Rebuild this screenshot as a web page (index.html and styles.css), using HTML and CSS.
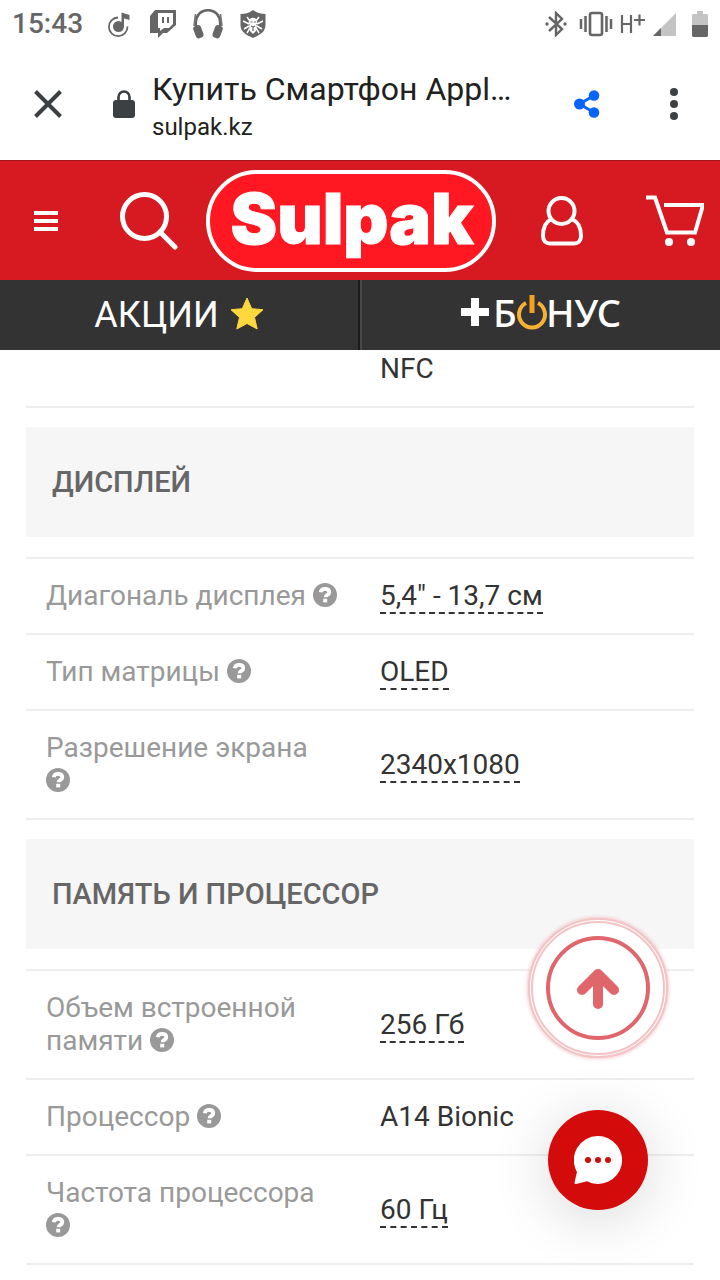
FILE: index.html
```html
<!DOCTYPE html>
<html lang="ru">
<head>
<meta charset="utf-8">
<meta name="viewport" content="width=device-width, initial-scale=1">
<title>Купить Смартфон Apple</title>
<link rel="stylesheet" href="styles.css">
</head>
<body>
<svg class="sprite" aria-hidden="true">
  <symbol id="help" viewBox="0 0 24 24">
    <circle cx="12" cy="12" r="12" fill="currentColor"/>
    <path d="M7.700 9.300C8 6.900 9.700 5.800 12 5.800c2.500 0 4.300 1.200 4.300 3.400 0 2.700-3.700 2.700-3.700 5" fill="none" stroke="#fff" stroke-width="3.800"/>
    <rect x="10.200" y="15.800" width="4" height="3.600" fill="#fff"/>
  </symbol>
</svg>

<div class="status">
  <div class="status-group">
    <span class="clock">15:43</span>
    <svg width="26" height="28" viewBox="0 0 26 28"><circle cx="11.500" cy="16.500" r="5.500" fill="#666"/><path d="M14.500 17V2.500l8 2.500v5l-5.500-1.500V17z" fill="#666"/><path d="M11 7.500a9.300 9.300 0 1 0 9.500 9" fill="none" stroke="#666" stroke-width="1.800"/></svg>
    <svg width="26" height="28" viewBox="0 0 26 28"><path d="M5 0h21v15l-9 8h-4l-5 5v-5H0V6z" fill="#666"/><path d="M8 3h15v11l-4 4h-5l-4 3v-3H8z" fill="#fff"/><path d="M13 7v6M18 7v6" stroke="#666" stroke-width="2"/></svg>
    <svg width="30" height="30" viewBox="0 0 30 30"><path d="M3 17C0-4 30-4 27 17" fill="none" stroke="#666" stroke-width="2.600"/><path d="M2.500 5 1 17M27.500 5 29 17" stroke="#777" stroke-width="1.600"/><rect x="1.500" y="16" width="8" height="13" rx="3" transform="rotate(-20 6 23)" fill="#666"/><rect x="20.500" y="16" width="8" height="13" rx="3" transform="rotate(20 24 23)" fill="#666"/></svg>
    <svg width="26" height="28" viewBox="0 0 26 28"><path d="M13 0c4 3 8 4 12.500 4v11c0 7-6 10-12.500 13C6.500 25 .5 22 .5 15V4C5 4 9 3 13 0z" fill="#666"/><g fill="none" stroke="#fff" stroke-width="1.500"><path d="M10 11 7 7M16 11l3-4M9 14l-6-3M17 14l6-3M9 16l-5 3M17 16l5 3M10 18l-3 5M16 18l3 5"/></g><circle cx="13" cy="12" r="4.300" fill="#fff"/><path d="M9 15h8l-1 6-3 3-3-3z" fill="#fff"/><path d="M10.500 12h2M14 12h2M11 16l2 1 2-1M13 17v4" stroke="#666" stroke-width="1.200" fill="none"/></svg>
  </div>
  <div class="status-group status-right">
    <svg width="22" height="26" viewBox="0 0 22 26"><path d="m4 6 13 12-6 6V2l6 6L4 20" fill="none" stroke="#666" stroke-width="2.400"/><circle cx="2" cy="13" r="1.700" fill="#666"/><circle cx="20" cy="13" r="1.700" fill="#666"/></svg>
    <svg width="34" height="26" viewBox="0 0 34 26"><rect x="11" y="2" width="12" height="22" rx="2" fill="none" stroke="#666" stroke-width="2.600"/><path d="M6.500 5v16M2 8v10M27.500 5v16M32 8v10" stroke="#666" stroke-width="2.500"/></svg>
    <svg class="network" width="27" height="26" viewBox="0 0 27 26"><path d="M3 4v18M12 4v18M3 13h9M15 9h11M20.500 3.500v11" fill="none" stroke="#666" stroke-width="2.200"/></svg>
    <svg width="24" height="24" viewBox="0 0 24 24"><path d="M24 1v23H1z" fill="#c4c4c4"/><path d="M9 16v8H1z" fill="#666"/></svg>
    <svg class="battery" width="16" height="26" viewBox="0 0 16 26"><path d="M5 0h6v3h4l1 1v11H0V4l1-1h4z" fill="#c4c4c4"/><path d="M0 14h16v11l-1 1H1l-1-1z" fill="#666"/></svg>
  </div>
</div>

<div class="toolbar">
  <button class="icon-btn close" aria-label="Закрыть"><svg width="28" height="28" viewBox="0 0 28 28"><path d="m1.500 1.500 25 25m0-25-25 25" stroke="#3c4043" stroke-width="4"/></svg></button>
  <svg class="lock" width="22" height="28" viewBox="0 0 22 28"><rect y="10" width="22" height="18" rx="3" fill="#3c4043"/><path d="M5.500 11V7a5.500 5.500 0 0 1 11 0v4" fill="none" stroke="#3c4043" stroke-width="2.600"/></svg>
  <div class="page-info">
    <div class="page-title">Купить Смартфон Appl…</div>
    <div class="page-host">sulpak.kz</div>
  </div>
  <button class="icon-btn share" aria-label="Поделиться"><svg width="26" height="28" viewBox="0 0 26 28"><g fill="#0a63fa"><circle cx="5.500" cy="14" r="5.500"/><circle cx="20" cy="5.500" r="5.300"/><circle cx="20" cy="22.500" r="5.300"/></g><path d="M20 5.500 5.500 14 20 22.500" fill="none" stroke="#0a63fa" stroke-width="2.800"/></svg></button>
  <button class="icon-btn" aria-label="Меню браузера"><svg width="8" height="32" viewBox="0 0 8 32"><g fill="#3c4043"><circle cx="4" cy="4" r="4"/><circle cx="4" cy="16" r="4"/><circle cx="4" cy="28" r="4"/></g></svg></button>
</div>

<header class="site-header">
  <button class="icon-btn" aria-label="Каталог"><svg width="24" height="20" viewBox="0 0 24 20"><path d="M0 2h24M0 10h24M0 18h24" stroke="#fff" stroke-width="4"/></svg></button>
  <button class="icon-btn search" aria-label="Поиск"><svg width="58" height="58" viewBox="0 0 58 58"><circle cx="24.500" cy="24.500" r="22" fill="none" stroke="#fff" stroke-width="5"/><path d="m40 40 15 15" stroke="#fff" stroke-width="5" stroke-linecap="round"/></svg></button>
  <a class="logo" href="#" aria-label="Sulpak"><svg width="290" height="102" viewBox="0 0 290 102"><rect x="2" y="2" width="286" height="98" rx="49" fill="#ff1721" stroke="#fff" stroke-width="4"/><text class="logo-text" x="146" y="74" text-anchor="middle">Sulpak</text></svg></a>
  <button class="icon-btn user" aria-label="Профиль"><svg width="42" height="50" viewBox="0 0 42 50"><g fill="none" stroke="#fff" stroke-width="4"><circle cx="20.500" cy="15" r="13"/><path d="M10 23.500C4 26 2 33 2 40c0 5 3 7.500 7 7.500h24c4 0 7-2.500 7-7.500 0-7-2-14-8.500-16.500"/></g></svg></button>
  <button class="icon-btn cart" aria-label="Корзина"><svg width="58" height="52" viewBox="0 0 58 52"><path d="M0 2.500h9l12 35h28l8-27.500H18" fill="none" stroke="#fff" stroke-width="4"/><circle cx="23" cy="47" r="4" fill="#fff"/><circle cx="45" cy="47" r="4" fill="#fff"/></svg></button>
</header>

<nav class="promo">
  <a class="promo-link" href="#">АКЦИИ <svg class="star" width="34" height="33" viewBox="0 0 34 33"><path d="m17 1 4.700 10.700 11.300 1-8.500 7.700 2.700 11.600L17 26.500 6.800 32l2.700-11.600L1 12.700l11.300-1z" fill="#ffd83d" stroke="#ffd83d" stroke-linejoin="round"/></svg></a>
  <a class="promo-link" href="#" aria-label="+БОНУС"><svg width="164" height="60" viewBox="0 0 164 60"><path d="M2 27h28M16 13v28" stroke="#fff" stroke-width="8"/><text class="bonus-text" x="34" y="42">Б</text><text class="bonus-text" x="87" y="42">НУС</text><path d="M67 18a13 13 0 1 0 12 0" fill="none" stroke="#f6b233" stroke-width="4"/><path d="M73 10v18" stroke="#f6a020" stroke-width="5"/></svg></a>
</nav>

<main class="specs">
  <table class="spec-table">
    <tr><th></th><td>NFC</td></tr>
  </table>

  <h2 class="section">ДИСПЛЕЙ</h2>
  <table class="spec-table ruled">
    <tr><th scope="row">Диагональ дисплея <svg class="help"><use href="#help"/></svg></th><td><a href="#">5,4" - 13,7 см</a></td></tr>
    <tr><th scope="row">Тип матрицы <svg class="help"><use href="#help"/></svg></th><td><a href="#">OLED</a></td></tr>
    <tr><th scope="row">Разрешение экрана<br><svg class="help"><use href="#help"/></svg></th><td><a href="#">2340x1080</a></td></tr>
  </table>

  <h2 class="section">ПАМЯТЬ И ПРОЦЕССОР</h2>
  <table class="spec-table ruled">
    <tr><th scope="row">Объем встроенной<br>памяти <svg class="help"><use href="#help"/></svg></th><td><a href="#">256 Гб</a></td></tr>
    <tr><th scope="row">Процессор <svg class="help"><use href="#help"/></svg></th><td>A14 Bionic</td></tr>
    <tr><th scope="row">Частота процессора<br><svg class="help"><use href="#help"/></svg></th><td><a href="#">60 Гц</a></td></tr>
  </table>
</main>

<div class="floating">
  <button class="to-top" aria-label="Наверх"><svg width="104" height="104" viewBox="0 0 104 104"><circle cx="52" cy="52" r="50" fill="none" stroke="#e0666b" stroke-width="4"/><path d="M52 68V40M36 54l16-16 16 16" fill="none" stroke="#e0666b" stroke-width="10" stroke-linecap="round" stroke-linejoin="round"/></svg></button>
  <button class="chat" aria-label="Чат"><svg width="48" height="48" viewBox="0 0 48 48"><path d="M24 0a24 24 0 1 1-11 45.300L2 48c-1 .2-1.700-.5-1.500-1.500L3 36A24 24 0 0 1 24 0z" fill="#fff"/><g fill="#d40b0b"><circle cx="14" cy="24" r="3"/><circle cx="24" cy="24" r="3"/><circle cx="34" cy="24" r="3"/></g></svg></button>
</div>
</body>
</html>
```

FILE: styles.css
```css
* { box-sizing: border-box; }
html { overflow: hidden; }
body {
  margin: 0;
  background: #fff;
  color: #333;
  font-family: Roboto, "Liberation Sans", sans-serif;
}
svg { display: block; flex: none; }
a { color: inherit; text-decoration: none; }
.sprite { position: absolute; width: 0; height: 0; }
.icon-btn {
  display: flex;
  padding: 0;
  border: 0;
  background: none;
  cursor: pointer;
}

.status {
  display: flex;
  justify-content: space-between;
  align-items: center;
  height: 48px;
  padding: 0 12px;
}
.status-group { display: flex; align-items: center; gap: 17px; }
.status-right { gap: 12px; }
.network { margin: 0 -6px; }
.battery { margin-left: 4px; }
.clock {
  margin-right: 7px;
  color: #666;
  font-size: 28px;
  font-weight: 500;
  line-height: 32px;
}

.toolbar {
  display: flex;
  align-items: center;
  height: 112px;
  padding: 0 42px 0 34px;
}
.lock { margin: 0 17px 0 51px; }
.page-info { flex: 1; min-width: 0; padding-top: 6px; color: #212121; }
.page-title {
  overflow: hidden;
  font-size: 32px;
  line-height: 40px;
  white-space: nowrap;
}
.page-host { font-size: 24px; line-height: 36px; }
.share { margin-right: 70px; }

.site-header {
  display: flex;
  justify-content: space-between;
  align-items: center;
  height: 120px;
  padding: 1px 16px 0 34px;
  border-top: 1px solid #a5151b;
  background: #d71921;
}
.search { margin-left: 34px; }
.user { margin-left: 17px; }
.cart { margin-left: 35px; }
.logo-text {
  fill: #fff;
  stroke: #fff;
  font-family: Inter, "Liberation Sans", sans-serif;
  font-size: 70px;
  font-weight: 900;
}

.promo {
  display: grid;
  grid-template-columns: 1fr 1fr;
  height: 70px;
  background: #333;
}
.promo-link {
  display: flex;
  justify-content: center;
  align-items: center;
  gap: 11px;
  color: #fff;
  font-size: 36px;
}
.promo-link + .promo-link { border-left: 2px solid #484848; }
.promo-link:first-child { border-right: 2px solid #1b1b1b; }
.star { margin-bottom: 4px; }
.bonus-text {
  fill: #fff;
  font-family: "Noto Sans", sans-serif;
  font-size: 38px;
  font-weight: 500;
}

.specs { padding: 2px 26px 0; }
.spec-table {
  width: 100%;
  border-collapse: separate;
  border-spacing: 0;
  table-layout: fixed;
  font-size: 28px;
  line-height: 33px;
}
.spec-table th,
.spec-table td {
  width: 50%;
  padding: 0 20px 21px;
  border-bottom: 2px solid #eee;
  font-weight: 400;
  text-align: left;
  vertical-align: middle;
}
.spec-table th { color: #999; }
.ruled { border-top: 2px solid #eee; }
.ruled th,
.ruled td { padding-top: 20px; }
.spec-table a { border-bottom: 2px dashed #333; }
.help {
  display: inline-block;
  width: 24px;
  height: 24px;
  vertical-align: -2px;
}
.section {
  margin: 19px 0 20px;
  padding: 39px 26px 38px;
  background: #f6f6f6;
  color: #666;
  font-size: 29px;
  font-weight: 500;
  line-height: 33px;
}

.floating {
  position: fixed;
  right: 52px;
  bottom: 70px;
  display: flex;
  flex-direction: column;
  align-items: center;
  gap: 52px;
}
.to-top,
.chat {
  display: flex;
  justify-content: center;
  align-items: center;
  padding: 0;
  border-radius: 50%;
  cursor: pointer;
}
.to-top {
  width: 140px;
  height: 140px;
  border: 5px double #f3c3c5;
  background: #fff;
  box-shadow: 0 0 4px #f0b0b3;
}
.chat {
  width: 100px;
  height: 100px;
  border: 0;
  background: #d40b0b;
  box-shadow: 0 8px 60px rgba(0, 0, 0, 0.16);
}
```
